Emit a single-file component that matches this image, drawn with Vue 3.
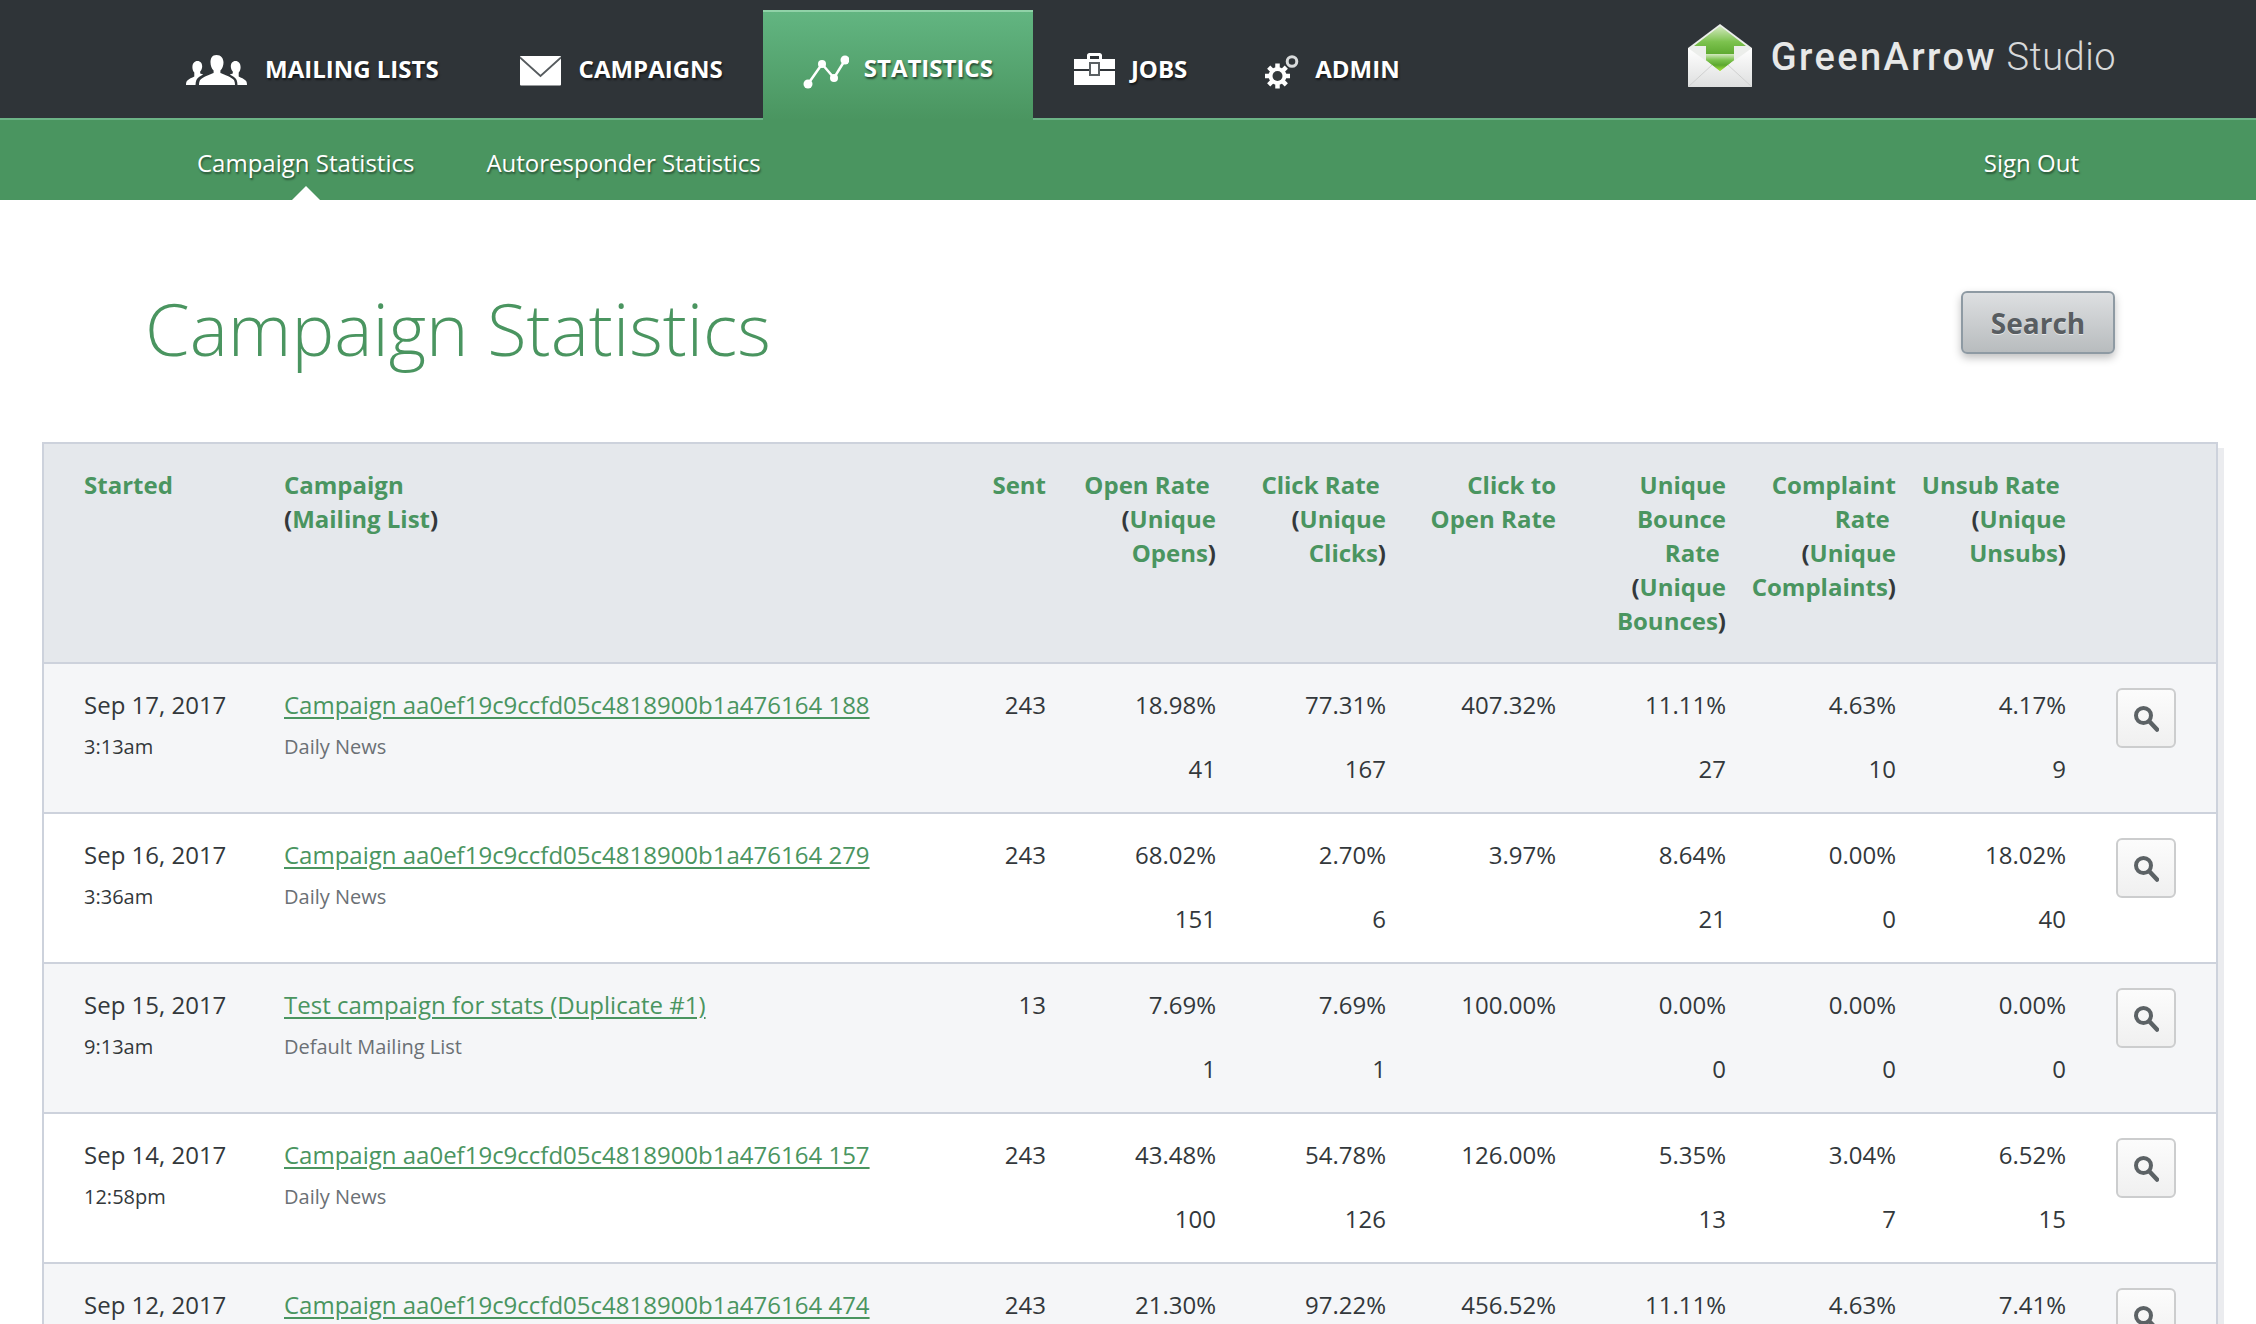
<script setup>
const rows = [
  { date: 'Sep 17, 2017', time: '3:13am', name: 'Campaign aa0ef19c9ccfd05c4818900b1a476164 188', list: 'Daily News', sent: '243',
    stats: [['18.98%', '41'], ['77.31%', '167'], ['407.32%', ''], ['11.11%', '27'], ['4.63%', '10'], ['4.17%', '9']] },
  { date: 'Sep 16, 2017', time: '3:36am', name: 'Campaign aa0ef19c9ccfd05c4818900b1a476164 279', list: 'Daily News', sent: '243',
    stats: [['68.02%', '151'], ['2.70%', '6'], ['3.97%', ''], ['8.64%', '21'], ['0.00%', '0'], ['18.02%', '40']] },
  { date: 'Sep 15, 2017', time: '9:13am', name: 'Test campaign for stats (Duplicate #1)', list: 'Default Mailing List', sent: '13',
    stats: [['7.69%', '1'], ['7.69%', '1'], ['100.00%', ''], ['0.00%', '0'], ['0.00%', '0'], ['0.00%', '0']] },
  { date: 'Sep 14, 2017', time: '12:58pm', name: 'Campaign aa0ef19c9ccfd05c4818900b1a476164 157', list: 'Daily News', sent: '243',
    stats: [['43.48%', '100'], ['54.78%', '126'], ['126.00%', ''], ['5.35%', '13'], ['3.04%', '7'], ['6.52%', '15']] },
  { date: 'Sep 12, 2017', time: '', name: 'Campaign aa0ef19c9ccfd05c4818900b1a476164 474', list: '', sent: '243',
    stats: [['21.30%', ''], ['97.22%', ''], ['456.52%', ''], ['11.11%', ''], ['4.63%', ''], ['7.41%', '']] },
]
</script>

<template>
  <div class="page">
    <header class="topbar">
      <nav class="mainnav">
        <a class="item">
          <svg class="ic ic-people" width="61" height="30" viewBox="0 0 61 30">
            <path fill="#fff" d="M30.500 0c4.600 0 7 3.400 7 7.600 0 3.200-1.200 6.200-3.100 8v2.400c3.500 1.400 10 3.600 13 6.600 1.200 1.300 1.600 3.400 1.600 5.400H13c0-2 .4-4.100 1.600-5.400 3-3 9.500-5.200 13-6.600v-2.400c-1.900-1.800-3.100-4.800-3.100-8C24.500 3.400 25.900 0 30.500 0z"/>
            <path fill="#fff" d="M11.500 6c3 0 4.700 2.300 4.700 5.200 0 2.200-.8 4.200-2 5.400v1.800l3 1.200c-3 1.500-6 3.400-6.800 5.400-.5 1.300-.8 3-.9 5H0c0-2 .3-3.400 1.100-4.300 1.900-2 4.800-3.100 7.200-4.300v-3.800c-1.200-1.200-1.900-3.200-1.900-5.400C6.400 8.300 8.500 6 11.500 6z"/>
            <path fill="#fff" d="M49.500 6c-3 0-4.700 2.300-4.700 5.200 0 2.200.8 4.200 2 5.400v1.800l-3 1.200c3 1.500 6 3.400 6.800 5.400.5 1.300.8 3 .9 5H61c0-2-.3-3.400-1.100-4.300-1.900-2-4.800-3.100-7.200-4.300v-3.800c1.200-1.200 1.900-3.200 1.900-5.400C54.600 8.300 52.500 6 49.500 6z"/>
          </svg>
          <span>MAILING LISTS</span>
        </a>
        <a class="item">
          <svg class="ic ic-mail" width="41" height="30" viewBox="0 0 41 30">
            <rect width="41" height="29.500" rx="1" fill="#fff"/>
            <path d="M0 1.500 20.500 20 41 1.500" fill="none" stroke="#565b5e" stroke-width="1.800"/>
          </svg>
          <span>CAMPAIGNS</span>
        </a>
        <a class="item active">
          <svg class="ic ic-chart" width="46" height="34" viewBox="0 0 46 34">
            <path d="M5 29 19 9 31 23 42 5" fill="none" stroke="#fff" stroke-width="2.500"/>
            <circle cx="5" cy="29" r="4.500" fill="#fff"/>
            <circle cx="19" cy="9" r="4" fill="#fff"/>
            <circle cx="31" cy="23" r="4" fill="#fff"/>
            <circle cx="42" cy="5" r="4.500" fill="#fff"/>
          </svg>
          <span>STATISTICS</span>
        </a>
        <a class="item jobs">
          <svg class="ic" width="41" height="32" viewBox="0 0 41 32">
            <path fill="#fff" fill-rule="evenodd" d="M13 6V2.500C13 1 14 0 15.500 0h10C27 0 28 1 28 2.500V6h13v10H0V6zM16 3v3h9V3z"/>
            <rect y="18" width="41" height="14" fill="#fff"/>
            <rect x="16" y="10" width="9" height="12" fill="#fff" stroke="#5b6063" stroke-width="2"/>
          </svg>
          <span>JOBS</span>
        </a>
        <a class="item admin">
          <svg class="ic ic-gear" width="35" height="34" viewBox="0 0 35 34">
            <g fill="#fff">
              <circle cx="13.500" cy="21" r="9"/>
              <g stroke="#fff" stroke-width="4.500">
                <path d="M13.500 8.500v25M1 21h25M4.700 12.200l17.600 17.600M22.300 12.200 4.700 29.800"/>
              </g>
            </g>
            <circle cx="13.500" cy="21" r="5" fill="#34393c"/>
            <circle cx="28" cy="6.500" r="4.800" fill="none" stroke="#d9dbdc" stroke-width="3"/>
          </svg>
          <span>ADMIN</span>
        </a>
      </nav>
      <div class="logo">
        <svg width="64" height="63" viewBox="0 0 64 63">
          <defs>
            <linearGradient id="env" x1="0" y1="0" x2="0" y2="1">
              <stop offset="0" stop-color="#ffffff"/>
              <stop offset="1" stop-color="#dedfdf"/>
            </linearGradient>
            <linearGradient id="arrow" x1="0" y1="0" x2="0" y2="1">
              <stop offset="0" stop-color="#d4e9c0"/>
              <stop offset=".35" stop-color="#7cc24e"/>
              <stop offset=".65" stop-color="#5ca82e"/>
              <stop offset="1" stop-color="#a8e43e"/>
            </linearGradient>
          </defs>
          <path fill="#eceeeb" d="M0 24 32 0l32 24v39H0z"/>
          <path fill="url(#arrow)" d="M32 2 58 22H46V36L32 47 18 36V22H6z"/>
          <path fill="url(#env)" d="M0 24 18 37 32 48 46 37 64 24V63H0z"/>
          <path fill="none" stroke="#cfd0cf" stroke-width="1" d="M0 63 24 41M64 63 40 41"/>
          <path fill="url(#arrow)" d="M18 30V36L32 47 46 36V30z"/>
        </svg>
        <span class="logotext"><b>GreenArrow</b> <i>Studio</i></span>
      </div>
    </header>

    <div class="subnav">
      <a class="sub current">Campaign Statistics</a>
      <a class="sub">Autoresponder Statistics</a>
      <a class="sub signout">Sign Out</a>
    </div>

    <main>
      <div class="titlebar">
        <h1>Campaign Statistics</h1>
        <button class="search">Search</button>
      </div>

      <div class="tablewrap">
        <table>
          <colgroup>
            <col style="width:220px"><col style="width:702px"><col style="width:100px">
            <col style="width:170px"><col style="width:170px"><col style="width:170px">
            <col style="width:170px"><col style="width:170px"><col style="width:170px"><col style="width:130px">
          </colgroup>
          <thead>
            <tr>
              <th class="first"><a>Started</a></th>
              <th><a>Campaign</a><br>(<a>Mailing List</a>)</th>
              <th class="r"><a>Sent</a></th>
              <th class="r"><a>Open Rate</a>&nbsp;<br>(<a>Unique<br>Opens</a>)</th>
              <th class="r"><a>Click Rate</a>&nbsp;<br>(<a>Unique<br>Clicks</a>)</th>
              <th class="r"><a>Click to<br>Open Rate</a></th>
              <th class="r"><a>Unique<br>Bounce<br>Rate</a>&nbsp;<br>(<a>Unique<br>Bounces</a>)</th>
              <th class="r"><a>Complaint<br>Rate</a>&nbsp;<br>(<a>Unique<br>Complaints</a>)</th>
              <th class="r"><a>Unsub Rate</a>&nbsp;<br>(<a>Unique<br>Unsubs</a>)</th>
              <th></th>
            </tr>
          </thead>
          <tbody>
            <tr v-for="row in rows" :key="row.name">
              <td class="first">
                <div class="main">{{ row.date }}</div>
                <div class="small">{{ row.time }}</div>
              </td>
              <td>
                <div class="main"><a class="link">{{ row.name }}</a></div>
                <div class="small muted">{{ row.list }}</div>
              </td>
              <td class="r"><div class="main">{{ row.sent }}</div></td>
              <td v-for="(s, i) in row.stats" :key="i" class="r">
                <div class="main">{{ s[0] }}</div>
                <div v-if="s[1]" class="count">{{ s[1] }}</div>
              </td>
              <td class="act">
                <button class="view" aria-label="View">
                  <svg width="26" height="27" viewBox="0 0 26 27">
                    <circle cx="10.500" cy="10.500" r="7.500" fill="none" stroke="#5c6265" stroke-width="4"/>
                    <path d="M16.500 16.500 24 24.500" stroke="#5c6265" stroke-width="4.500" stroke-linecap="round"/>
                  </svg>
                </button>
              </td>
            </tr>
          </tbody>
        </table>
      </div>
    </main>
  </div>
</template>

<style>
html, body { margin: 0; background: #fff; }
</style>

<style scoped>
.page {
  height: 1324px;
  overflow: hidden;
  font-family: "Open Sans", "Noto Sans", sans-serif;
  font-size: 24px;
  color: #33383b;
  background: #fff;
}
.topbar {
  height: 118px;
  border-bottom: 2px solid #6cb386;
  background: #2f3438;
  display: flex;
  justify-content: space-between;
}
.mainnav {
  display: flex;
  padding-left: 146px;
  height: 120px;
}
.item {
  display: flex;
  align-items: center;
  gap: 18px;
  height: 120px;
  padding: 17px 40px 0;
  box-sizing: border-box;
  color: #fff;
  font-weight: 700;
  font-size: 24px;
  text-shadow: 1px 2px 2px rgba(0, 0, 0, .55);
}
.item:first-child { padding-right: 41px; }
.item.active {
  margin-top: 10px;
  height: 110px;
  padding-top: 3px;
  padding-bottom: 0;
  gap: 15px;
  border-top: 2px solid #90d2a8;
  background: linear-gradient(#62b581, #4a9560);
}
.item.jobs { padding-left: 41px; padding-right: 37px; gap: 16px; }
.item.admin { gap: 16px; }
.ic { flex: none; }
.ic-people { margin-top: 3px; }
.ic-mail { margin-top: 5px; }
.ic-chart { margin-top: 8px; }
.ic-gear { margin-top: 7px; }
.logo {
  display: flex;
  align-items: flex-start;
  padding: 24px 140px 0 0;
  gap: 19px;
}
.logotext {
  margin-top: 9px;
  font-family: "Roboto", "Liberation Sans", sans-serif;
  font-size: 38px;
  line-height: 48px;
  color: #e7e8e8;
  white-space: nowrap;
}
.logotext b { font-weight: 500; letter-spacing: 2.400px; }
.logotext i { font-style: normal; font-weight: 300; letter-spacing: .5px; color: #d7d9da; }
.subnav {
  height: 80px;
  box-sizing: border-box;
  padding: 6px 177px 0 197px;
  background: #4a9560;
  display: flex;
  align-items: center;
  gap: 72px;
}
.sub {
  position: relative;
  color: #fff;
  font-size: 24px;
  line-height: 34px;
  text-shadow: 1px 2px 2px rgba(0, 0, 0, .45);
}
.signout { margin-left: auto; }
.current::after {
  content: "";
  position: absolute;
  left: 95px;
  top: 40px;
  border-left: 14px solid transparent;
  border-right: 14px solid transparent;
  border-bottom: 14px solid #fff;
}
.titlebar {
  height: 242px;
  box-sizing: border-box;
  padding: 0 141px 0 145px;
  display: flex;
  justify-content: space-between;
  align-items: flex-start;
}
h1 {
  margin: 79px 0 0;
  font-size: 72px;
  line-height: 98px;
  font-weight: 300;
  color: #4a9560;
}
.search {
  margin-top: 91px;
  width: 154px;
  height: 63px;
  box-sizing: border-box;
  border: 2px solid #8e9aa3;
  border-radius: 6px;
  background: linear-gradient(#dddfe1, #b8bcbe);
  box-shadow: 0 4px 8px rgba(0, 0, 0, .25);
  font-family: inherit;
  font-size: 28px;
  font-weight: 700;
  color: #585d61;
  text-shadow: 0 1px 0 rgba(255, 255, 255, .6);
  padding: 0;
}
.tablewrap {
  margin-left: 42px;
  width: 2172px;
  border: 2px solid #cdd2dc;
  border-bottom: 0;
  box-shadow: 6px 6px 0 #ebecef;
}
table {
  width: 2172px;
  table-layout: fixed;
  border-collapse: collapse;
  line-height: 34px;
}
th {
  background: #e5e8ec;
  padding: 24px 20px;
  vertical-align: top;
  text-align: left;
  font-weight: 700;
  color: #33383b;
  white-space: nowrap;
  border-bottom: 2px solid #cdd2dc;
}
th a { color: #4a9560; }
td {
  padding: 24px 20px 26px;
  height: 98px;
  vertical-align: top;
  border-bottom: 2px solid #cdd2dc;
  white-space: nowrap;
}
tbody tr:nth-child(odd) td { background: #f5f6f8; }
th.first, td.first { padding-left: 40px; }
th.r, td.r { text-align: right; }
th.r { padding-left: 0; }
.main { height: 34px; }
.small {
  margin-top: 11px;
  font-size: 20px;
  line-height: 28px;
}
.muted { color: #6b7075; }
.count { margin-top: 30px; }
.link {
  color: #4a9560;
  text-decoration: underline;
  text-underline-offset: 3px;
}
td.act { padding: 24px 0 0 30px; }
.view {
  display: flex;
  align-items: center;
  justify-content: center;
  width: 60px;
  height: 60px;
  padding: 0;
  box-sizing: border-box;
  border: 2px solid #cccdce;
  border-radius: 6px;
  background: linear-gradient(#fcfcfc, #f0f0f0);
}
</style>
